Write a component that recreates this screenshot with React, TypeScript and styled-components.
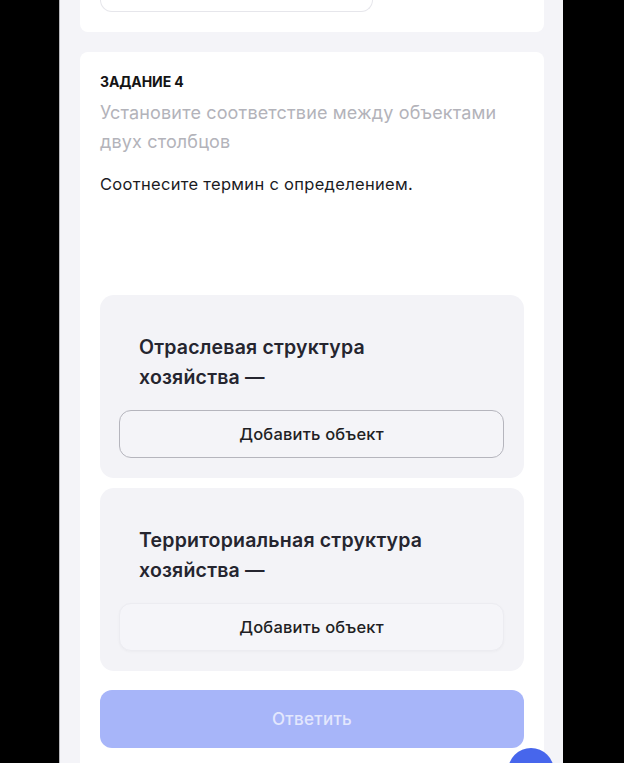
import React from "react";
import styled, { createGlobalStyle } from "styled-components";

const GlobalStyle = createGlobalStyle`
  html, body {
    margin: 0;
    padding: 0;
    background: #000;
    font-family: Inter, "Noto Sans", sans-serif;
    -webkit-font-smoothing: antialiased;
  }
`;

const Screen = styled.div`
  height: 763px;
  overflow: hidden;
  display: flex;
`;

const Phone = styled.div`
  position: relative;
  margin-left: 59px;
  width: 504px;
  height: 763px;
  border-left: 1px solid #b9b9bd;
  background: #f4f4f8;
  padding: 0 19px 0 20px;
  box-sizing: border-box;
  display: flex;
  flex-direction: column;
  gap: 20px;
  overflow: hidden;
`;

const PrevCard = styled.div`
  flex: none;
  height: 32px;
  background: #fff;
  border-radius: 0 0 8px 8px;
  padding: 0 20px;
  box-sizing: border-box;
`;

const PrevButton = styled.div`
  width: 273px;
  height: 12px;
  border: 1px solid #e6e6eb;
  border-top: none;
  border-radius: 0 0 14px 14px;
  box-sizing: border-box;
`;

const Card = styled.section`
  flex: 1;
  background: #fff;
  border-radius: 8px 8px 0 0;
  padding: 21px 20px 0;
  display: flex;
  flex-direction: column;
`;

const Label = styled.div`
  font-size: 14px;
  line-height: 18px;
  font-weight: 700;
  color: #141414;
  letter-spacing: -0.1px;
`;

const Hint = styled.p`
  margin: 7px 0 0;
  font-size: 18px;
  line-height: 29px;
  letter-spacing: 0.15px;
  color: #b3b3ba;
  font-weight: 400;
  max-width: 410px;
`;

const Question = styled.p`
  margin: 16px 0 0;
  font-size: 16.5px;
  line-height: 24px;
  letter-spacing: 0.3px;
  color: #1b1b1f;
  font-weight: 400;
`;

const Pairs = styled.div`
  margin-top: 99px;
  display: flex;
  flex-direction: column;
  gap: 10px;
`;

const PairBox = styled.div`
  background: #f3f3f7;
  border-radius: 14px;
  padding: 37px 20px 20px 19px;
  display: flex;
  flex-direction: column;
`;

const Term = styled.div`
  padding-left: 20px;
  font-size: 19.5px;
  line-height: 30px;
  letter-spacing: 0.2px;
  font-weight: 600;
  color: #25252f;
  max-width: 310px;
`;

const AddButton = styled.button<{ $active?: boolean }>`
  margin-top: 18px;
  height: 48px;
  border-radius: 12px;
  border: 1px solid ${({ $active }) => ($active ? "#b5b5bd" : "#ececf1")};
  background: ${({ $active }) => ($active ? "#f4f4f8" : "#f5f5f9")};
  box-shadow: ${({ $active }) => ($active ? "none" : "0 1px 3px rgba(0,0,0,0.03)")};
  font-family: inherit;
  font-size: 16.5px;
  letter-spacing: 0.2px;
  font-weight: 500;
  color: #1f1f24;
  cursor: pointer;
`;

const SubmitButton = styled.button`
  margin-top: 19px;
  height: 58px;
  border: none;
  border-radius: 12px;
  background: #a7b5f9;
  color: #e3e7fd;
  font-family: inherit;
  font-size: 17px;
  letter-spacing: 0.3px;
  font-weight: 500;
`;

const Fab = styled.div`
  position: absolute;
  left: 448px;
  top: 748px;
  width: 46px;
  height: 46px;
  border-radius: 50%;
  background: #4766ec;
`;

const pairs = [
  { term: "Отраслевая структура хозяйства —", active: true },
  { term: "Территориальная структура хозяйства —", active: false },
];

export default function App() {
  return (
    <>
      <GlobalStyle />
      <Screen>
        <Phone>
          <PrevCard>
            <PrevButton />
          </PrevCard>
          <Card>
            <Label>ЗАДАНИЕ 4</Label>
            <Hint>Установите соответствие между объектами двух столбцов</Hint>
            <Question>Соотнесите термин с определением.</Question>
            <Pairs>
              {pairs.map((p) => (
                <PairBox key={p.term}>
                  <Term>{p.term}</Term>
                  <AddButton $active={p.active}>Добавить объект</AddButton>
                </PairBox>
              ))}
            </Pairs>
            <SubmitButton>Ответить</SubmitButton>
          </Card>
          <Fab />
        </Phone>
      </Screen>
    </>
  );
}
